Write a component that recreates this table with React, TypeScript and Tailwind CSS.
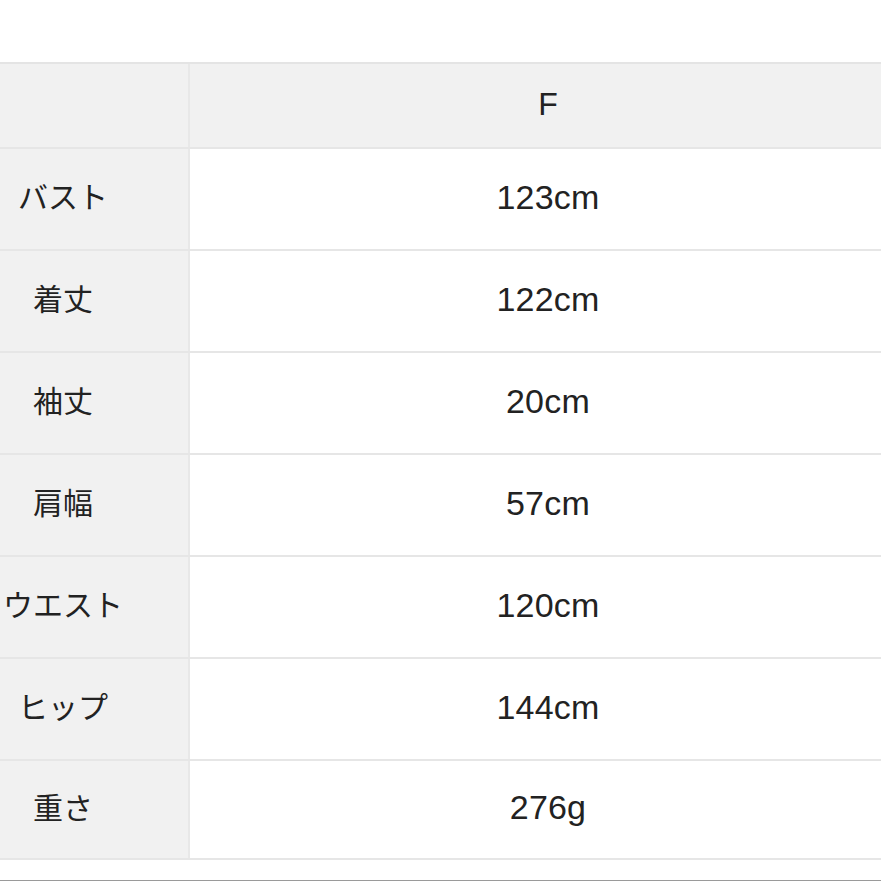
const ROWS = [
  { label: "バスト", value: "123cm" },
  { label: "着丈", value: "122cm" },
  { label: "袖丈", value: "20cm" },
  { label: "肩幅", value: "57cm" },
  { label: "ウエスト", value: "120cm" },
  { label: "ヒップ", value: "144cm" },
  { label: "重さ", value: "276g" },
];

export default function App() {
  return (
    <div
      className="w-[881px] h-[881px] bg-white overflow-hidden flex flex-col text-[#222]"
      style={{ fontFamily: '"Liberation Sans", "Noto Sans CJK JP", sans-serif' }}
    >
      <div className="h-[62px] shrink-0" />

      {/* Table */}
      <div className="border-t-2 border-[#e4e4e4]">
        {/* Header */}
        <div className="grid grid-cols-[190px_1fr] h-[85px] border-b-2 border-[#e6e6e6] bg-[#f1f1f1]">
          <div className="border-r-2 border-[#e8e8e8]" />
          <div className="flex items-center justify-center pl-[25px] pb-[3px] text-[32px]">F</div>
        </div>

        {ROWS.map((row) => (
          <div
            key={row.label}
            className="grid grid-cols-[190px_1fr] h-[102px] border-b-2 border-[#e6e6e6] last:h-[99px]"
          >
            <div className="flex items-center justify-center pr-[62px] pb-[3px] bg-[#f1f1f1] border-r-2 border-[#e8e8e8] text-[30px]">
              {row.label}
            </div>
            <div className="flex items-center justify-center pl-[25px] pb-[4px] bg-white text-[34px] tracking-[0.2px]">
              {row.value}
            </div>
          </div>
        ))}
      </div>

      <div className="flex-1" />
      <div className="h-px bg-[#9a9a9a] shrink-0" />
    </div>
  );
}
